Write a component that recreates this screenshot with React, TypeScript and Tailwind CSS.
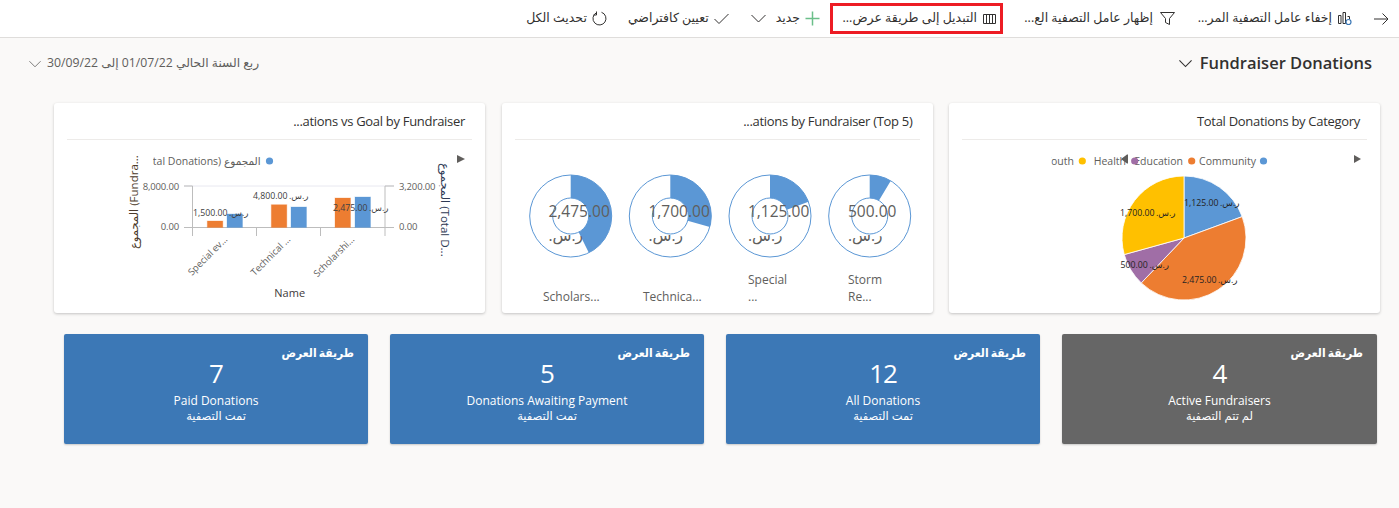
import React from "react";

const FONT = "font-['Open_Sans','DejaVu_Sans',sans-serif]";
const SAR = "ر.س.\u200F";

function wedge(cx: number, cy: number, r: number, a0: number, a1: number, ir = 0) {
  const p = (rad: number, a: number) => {
    const t = (a / 100) * 2 * Math.PI;
    return `${(cx + rad * Math.sin(t)).toFixed(2)} ${(cy - rad * Math.cos(t)).toFixed(2)}`;
  };
  const large = a1 - a0 > 50 ? 1 : 0;
  if (ir > 0) {
    return `M${p(r, a0)} A${r} ${r} 0 ${large} 1 ${p(r, a1)} L${p(ir, a1)} A${ir} ${ir} 0 ${large} 0 ${p(ir, a0)} Z`;
  }
  return `M${cx} ${cy} L${p(r, a0)} A${r} ${r} 0 ${large} 1 ${p(r, a1)} Z`;
}

function ChartCard({ title, children }: { title: string; children: React.ReactNode }) {
  return (
    <div className="w-[431px] h-[210px] bg-white rounded-[3px] shadow-[0_1px_3px_rgba(0,0,0,0.22)] flex flex-col">
      <div className="h-[37px] mx-[13px] border-b border-[#edebe9] flex items-center pr-[7px]">
        <span dir="ltr" className="text-[13px] font-medium tracking-[-0.3px] text-[#323130] leading-none">{title}</span>
      </div>
      <div dir="ltr" className="h-[173px]">{children}</div>
    </div>
  );
}

function Tile({ n, label, sub, w, bg }: { n: string; label: string; sub: string; w: string; bg: string }) {
  return (
    <div className={`${w} ${bg} h-[110px] rounded-[2px] shadow-[0_1px_2px_rgba(0,0,0,0.2)] text-white flex flex-col pt-[10px]`}>
      <div className="text-[12px] font-bold [font-stretch:condensed] leading-[18px] pr-[14px]">طريقة العرض</div>
      <div className="text-center text-[26px] leading-[30px] -mt-[4px] tracking-[-1px]" dir="ltr">{n}</div>
      <div className="text-center text-[12px] leading-[18px] mt-[4px]" dir="ltr">{label}</div>
      <div className="text-center text-[11.5px] leading-[14px] -mt-[1px]">{sub}</div>
    </div>
  );
}

function ToolItem({ icon, text, className = "" }: { icon?: React.ReactNode; text?: string; className?: string }) {
  return (
    <div className={`flex items-center text-[12.5px] text-[#323130] whitespace-nowrap ${className}`}>
      {icon}
      {text && <span>{text}</span>}
    </div>
  );
}

const stroke = { fill: "none", stroke: "#323130", strokeWidth: 1 };

function ArrowIcon() {
  return <svg width="16" height="16" viewBox="0 0 16 16" {...stroke} className="shrink-0"><path d="M1 8H15M9.500 2.500L15 8l-5.500 5.500" /></svg>;
}
function FilterIcon() {
  return <svg width="15" height="15" viewBox="0 0 15 15" {...stroke} className="shrink-0"><path d="M.5 1.500H14.500L9.500 7.500V13.500L5.500 11.500V7.500Z" /></svg>;
}
function PlusIcon() {
  return <svg width="15" height="15" viewBox="0 0 15 15" fill="none" stroke="#6bbf8a" strokeWidth="1.5" className="shrink-0"><path d="M7.500 .5V14.500M.5 7.500H14.500" /></svg>;
}
function ChevronIcon({ size = 15, color = "#323130", width = 1 }: { size?: number; color?: string; width?: number }) {
  return <svg width={size} height={size} viewBox="0 0 15 15" fill="none" stroke={color} strokeWidth={width} className="shrink-0"><path d="M.5 4L7.500 11L14.500 4" /></svg>;
}
function CheckIcon() {
  return <svg width="15" height="15" viewBox="0 0 15 15" {...stroke} className="shrink-0"><path d="M.5 8L5 12.500L14.500 3" /></svg>;
}
function RefreshIcon() {
  return <svg width="15" height="15" viewBox="0 0 15 15" {...stroke} className="shrink-0"><path d="M9.500 1.300A6.500 6.500 0 1 1 4.300 1.800M4.500 .5V4H1.500" /></svg>;
}
function ColumnsIcon() {
  return (
    <svg width="15" height="15" viewBox="0 0 15 15" fill="none" stroke="#323130" strokeWidth="1" className="shrink-0">
      <path d="M1.500 3.500H13.500V12.500H1.500ZM4.500 3.500V12.500M7.500 3.500V12.500M10.500 3.500V12.500" />
    </svg>
  );
}
function ChartFilterIcon() {
  return (
    <svg width="15" height="15" viewBox="0 0 15 15" fill="none" className="shrink-0">
      <path d="M1.500 4.500H4V12.500H1.500ZM6 1.500H8.500V12.500H6Z" stroke="#323130" strokeWidth="1" />
      <path d="M10.500 5.500H12.500V8" stroke="#323130" strokeWidth="1" />
      <circle cx="11.500" cy="11" r="2.500" stroke="#3b78b6" strokeWidth="1.200" />
    </svg>
  );
}

function Legend({ x, y, c, t, end }: { x: number; y: number; c: string; t: string; end: number }) {
  return (
    <>
      <circle cx={x} cy={y} r={3.6} fill={c} />
      <text x={end} y={y + 4} textAnchor="end" fontSize="10.500" fill="#605e5c">{t}</text>
    </>
  );
}

function DataLabel({ t, x, y, fill = "#404040", weight = 400, sarDx = 36 }: { t: string; x: number; y: number; fill?: string; weight?: number; sarDx?: number }) {
  return (
    <>
      <text x={x} y={y} fontSize="8.750" fill={fill} fontWeight={weight}>{t}</text>
      <text x={x + sarDx} y={y} fontSize="8.750" fill={fill}>{SAR}</text>
    </>
  );
}

function PieChart() {
  const slices = [
    { a: 0, b: 19.4, f: "#5b97d5" },
    { a: 19.4, b: 62.1, f: "#ed7d31" },
    { a: 62.1, b: 70.7, f: "#a06ea6" },
    { a: 70.7, b: 100, f: "#ffc000" },
  ];
  return (
    <svg viewBox="949 140 431 173" className="w-[431px] h-[173px]">
      <defs>
        <clipPath id="legendClip"><rect x="1051.500" y="150" width="240" height="22" /></clipPath>
      </defs>
      <g clipPath="url(#legendClip)">
        <Legend x={1263.500} y={161} c="#5b97d5" t="Community" end={1256} />
        <Legend x={1191.700} y={161} c="#ed7d31" t="Education" end={1183} />
        <Legend x={1134.700} y={161} c="#a06ea6" t="Health" end={1126} />
        <Legend x={1082.300} y={161} c="#ffc000" t="Youth" end={1074} />
      </g>
      <path d="M1127 154.500v9l-6-4.500z M1128 154.500h-1v9h1z" fill="#605e5c" />
      <path d="M1354 155v8l7-4z" fill="#605e5c" />
      {slices.map((s) => (
        <path key={s.f} d={wedge(1184, 238, 62, s.a, s.b)} fill={s.f} stroke="#fff" strokeWidth="0.8" />
      ))}
      <DataLabel t="1,125.00" x={1184} y={205.5} fill="#252423" weight={500} />
      <DataLabel t="1,700.00" x={1120} y={215.5} fill="#252423" weight={500} />
      <DataLabel t="500.00" x={1120.500} y={267.5} fill="#252423" weight={500} sarDx={29} />
      <DataLabel t="2,475.00" x={1182} y={282.5} fill="#252423" weight={500} />
    </svg>
  );
}

function Donuts() {
  const items = [
    { cx: 569.7, v: 42.7, t: "2,475.00", tx: 547.5, l: [["Scholars...", 542, 301]] },
    { cx: 669.3, v: 29.3, t: "1,700.00", tx: 647.5, l: [["Technica...", 642, 301]] },
    { cx: 769, v: 19.4, t: "1,125.00", tx: 747, l: [["Special", 747, 284], ["...", 747, 301]] },
    { cx: 868.7, v: 8.6, t: "500.00", tx: 847, l: [["Storm", 847, 284], ["Re...", 847, 301]] },
  ];
  return (
    <svg viewBox="501 140 431 173" className="w-[431px] h-[173px]">
      {items.map((d) => (
        <g key={d.t}>
          <path d={wedge(d.cx, 216, 41, 0, d.v, 18)} fill="#5b97d5" />
          <circle cx={d.cx} cy={216} r={41} fill="none" stroke="#5b97d5" strokeWidth="1" />
          <circle cx={d.cx} cy={216} r={18} fill="none" stroke="#5b97d5" strokeWidth="1" />
          <text x={d.tx} y={217} fontSize="15.500" fill="#605e5c">{d.t}</text>
          <text x={d.tx} y={241} fontSize="15.500" fill="#605e5c">{SAR}</text>
          {d.l.map(([t, x, y]) => (
            <text key={String(t)} x={Number(x)} y={Number(y)} fontSize="12" fill="#605e5c">{String(t)}</text>
          ))}
        </g>
      ))}
    </svg>
  );
}

function ComboChart() {
  const bars = [
    [207.3, 221, "#ed7d31"],
    [227, 214, "#5b97d5"],
    [271.3, 204.7, "#ed7d31"],
    [291, 207, "#5b97d5"],
    [335, 198, "#ed7d31"],
    [355, 197, "#5b97d5"],
  ] as const;
  const grey = "#605e5c";
  return (
    <svg viewBox="54 140 431 173" className="w-[431px] h-[173px]">
      <defs>
        <clipPath id="comboClip"><rect x="153" y="150" width="120" height="22" /></clipPath>
      </defs>
      <circle cx={269.500} cy={161} r={3.600} fill="#5b97d5" />
      <g clipPath="url(#comboClip)">
        <text x={260.700} y={165} textAnchor="end" fontSize="10.500" fill={grey}>(Total Donations) المجموع</text>
      </g>
      <path d="M457 155v8l8-4z" fill="#605e5c" />
      <path d="M184 186H394" stroke="#e8e8f0" strokeWidth="1" />
      <path d="M184 227.500H394" stroke="#bdbdbd" strokeWidth="1" />
      <path d="M192.500 186V236M256.500 228V236M320.500 228V236M385 186V236M192.500 186H184M385 186H394" stroke="#bdbdbd" strokeWidth="1" fill="none" />
      {bars.map(([x, y, f]) => (
        <rect key={x} x={x} y={y} width={15.500} height={227.500 - y} fill={f} stroke={f} strokeOpacity="0.3" strokeWidth="1" />
      ))}
      <text x={179} y={189.5} textAnchor="end" fontSize="9.500" letterSpacing="-0.15" fill={grey}>8,000.00</text>
      <text x={179} y={230} textAnchor="end" fontSize="9.500" letterSpacing="-0.15" fill={grey}>0.00</text>
      <text x={399} y={189.5} fontSize="9.500" letterSpacing="-0.15" fill={grey}>3,200.00</text>
      <text x={399} y={230} fontSize="9.500" letterSpacing="-0.15" fill={grey}>0.00</text>
      <DataLabel t="1,500.00" x={193} y={215.5} />
      <DataLabel t="4,800.00" x={253} y={198.5} />
      <DataLabel t="2,475.00" x={333} y={210.5} />
      <text transform="translate(228 240) rotate(-45)" textAnchor="end" fontSize="9.500" fill={grey}>Special ev...</text>
      <text transform="translate(291 240) rotate(-45)" textAnchor="end" fontSize="9.500" fill={grey}>Technical ...</text>
      <text transform="translate(355 240) rotate(-45)" textAnchor="end" fontSize="9.500" fill={grey}>Scholarshi...</text>
      <text x={289.700} y={297} textAnchor="middle" fontSize="11" fill="#403a3a">Name</text>
      <text transform="translate(138 249) rotate(-90)" fontSize="11.500" fill="#4b3a2a">المجموع (Fundra...</text>
      <text transform="translate(441 163) rotate(90)" fontSize="11.500" fill="#2f3a55">المجموع (Total D...</text>
    </svg>
  );
}

export default function App() {
  return (
    <div dir="rtl" className={`${FONT} w-[1399px] h-[508px] overflow-hidden bg-[#faf9f8]`}>
      <div className="h-[38px] bg-white border-b border-[#dfdddb] flex items-center pr-[10px]">
        <ArrowIcon />
        <ToolItem className="mr-[21px] w-[152px] gap-[5px]" icon={<ChartFilterIcon />} text="إخفاء عامل التصفية المر..." />
        <ToolItem className="mr-[25px] w-[152px] gap-[7px]" icon={<FilterIcon />} text="إظهار عامل التصفية الع..." />
        <div className="mr-[20px] w-[173px] h-[31px] border-[3px] border-[#ed1c24] flex items-center pr-[3px]">
          <ToolItem className="gap-[5px]" icon={<ColumnsIcon />} text="التبديل إلى طريقة عرض..." />
        </div>
        <ToolItem className="mr-[10px] gap-[5px]" icon={<PlusIcon />} text="جديد" />
        <div className="mr-[10px]"><ChevronIcon /></div>
        <ToolItem className="mr-[22px] gap-[5px]" icon={<CheckIcon />} text="تعيين كافتراضي" />
        <ToolItem className="mr-[21px] gap-[5px]" icon={<RefreshIcon />} text="تحديث الكل" />
      </div>

      <div className="h-[50px] flex items-center justify-between pr-[27px] pl-[29px]">
        <div className="flex items-center gap-[8px]">
          <span dir="ltr" className="text-[16.5px] font-semibold text-[#323130]">Fundraiser Donations</span>
          <ChevronIcon size={13} width={1.3} />
        </div>
        <div className="flex items-center gap-[6px] text-[12.25px] text-[#605e5c] pt-[1px]">
          <span>ربع السنة الحالي 01/07/22 إلى 30/09/22</span>
          <ChevronIcon size={12} color="#605e5c" />
        </div>
      </div>

      <div className="flex gap-[16.5px] pr-[19px] mt-[15px]">
        <ChartCard title="Total Donations by Category"><PieChart /></ChartCard>
        <ChartCard title="...ations by Fundraiser (Top 5)"><Donuts /></ChartCard>
        <ChartCard title="...ations vs Goal by Fundraiser"><ComboChart /></ChartCard>
      </div>

      <div className="flex gap-[22px] pr-[22px] mt-[21px]">
        <Tile w="w-[315px]" bg="bg-[#666666]" n="4" label="Active Fundraisers" sub="لم تتم التصفية" />
        <Tile w="w-[314px]" bg="bg-[#3c78b6]" n="12" label="All Donations" sub="تمت التصفية" />
        <Tile w="w-[314px]" bg="bg-[#3c78b6]" n="5" label="Donations Awaiting Payment" sub="تمت التصفية" />
        <Tile w="w-[304px]" bg="bg-[#3c78b6]" n="7" label="Paid Donations" sub="تمت التصفية" />
      </div>
    </div>
  );
}
